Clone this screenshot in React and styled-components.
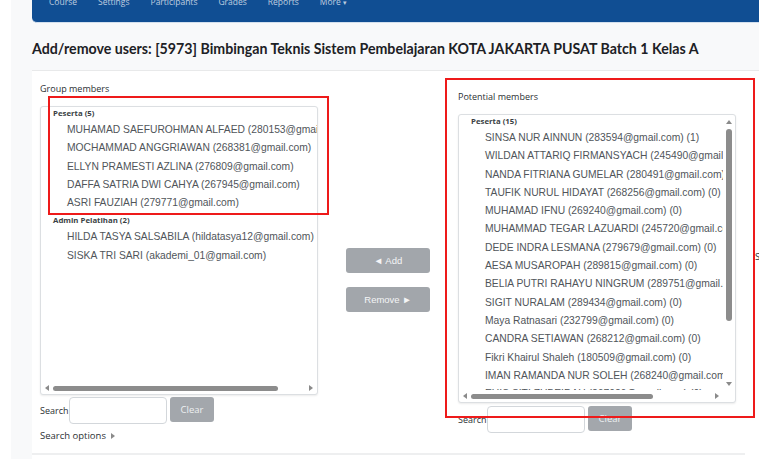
import styled, { createGlobalStyle } from "styled-components";

const GlobalStyle = createGlobalStyle`
  html, body {
    margin: 0;
    padding: 0;
    background: #ffffff;
    overflow: hidden;
  }
  body {
    font-family: "Open Sans", "Liberation Sans", sans-serif;
    color: #1d2125;
  }
`;

const groupMembers = [
  {
    label: "Peserta (5)",
    items: [
      "MUHAMAD SAEFUROHMAN ALFAED (280153@gmail.com)",
      "MOCHAMMAD ANGGRIAWAN (268381@gmail.com)",
      "ELLYN PRAMESTI AZLINA (276809@gmail.com)",
      "DAFFA SATRIA DWI CAHYA (267945@gmail.com)",
      "ASRI FAUZIAH (279771@gmail.com)",
    ],
  },
  {
    label: "Admin Pelatihan (2)",
    items: [
      "HILDA TASYA SALSABILA (hildatasya12@gmail.com)",
      "SISKA TRI SARI (akademi_01@gmail.com)",
    ],
  },
];

const potentialMembers = [
  {
    label: "Peserta (15)",
    items: [
      "SINSA NUR AINNUN (283594@gmail.com) (1)",
      "WILDAN ATTARIQ FIRMANSYACH (245490@gmail.com) (0)",
      "NANDA FITRIANA GUMELAR (280491@gmail.com) (0)",
      "TAUFIK NURUL HIDAYAT (268256@gmail.com) (0)",
      "MUHAMAD IFNU (269240@gmail.com) (0)",
      "MUHAMMAD TEGAR LAZUARDI (245720@gmail.com) (0)",
      "DEDE INDRA LESMANA (279679@gmail.com) (0)",
      "AESA MUSAROPAH (289815@gmail.com) (0)",
      "BELIA PUTRI RAHAYU NINGRUM (289751@gmail.com) (0)",
      "SIGIT NURALAM (289434@gmail.com) (0)",
      "Maya Ratnasari (232799@gmail.com) (0)",
      "CANDRA SETIAWAN (268212@gmail.com) (0)",
      "Fikri Khairul Shaleh (180509@gmail.com) (0)",
      "IMAN RAMANDA NUR SOLEH (268240@gmail.com) (0)",
      "EUIS SITI ZUBEIDAH (267026@gmail.com) (0)",
    ],
  },
];

const navItems = ["Course", "Settings", "Participants", "Grades", "Reports"];

export default function App() {
  return (
    <>
      <GlobalStyle />
      <Page>
        <Gutter />
        <Main>
          <NavBar>
            {navItems.map((item) => (
              <NavItem key={item}>{item}</NavItem>
            ))}
            <NavItem>
              More <Caret>▾</Caret>
            </NavItem>
          </NavBar>

          <Header>
            <Title>
              Add/remove users: [5973] Bimbingan Teknis Sistem Pembelajaran KOTA
              JAKARTA PUSAT Batch 1 Kelas A
            </Title>
          </Header>

          <Content>
            <Form>
              <Column>
                <FieldLabel>Group members</FieldLabel>
                <SelectBox groups={groupMembers} thumbOffset={14} thumbSize={225} />
                <SearchRow>
                  <SearchLabel>Search</SearchLabel>
                  <SearchInput />
                  <ClearButton>Clear</ClearButton>
                </SearchRow>
                <SearchOptions>
                  Search options <SmallArrow />
                </SearchOptions>
              </Column>

              <Actions>
                <ActionButton>◄ Add</ActionButton>
                <ActionButton>Remove ►</ActionButton>
              </Actions>

              <Column $shift={8}>
                <FieldLabel>Potential members</FieldLabel>
                <SelectBox
                  groups={potentialMembers}
                  vertical
                  thumbOffset={14}
                  thumbSize={182}
                />
                <SearchRow $gap={3}>
                  <SearchLabel>Search</SearchLabel>
                  <SearchInput />
                  <ClearButton>Clear</ClearButton>
                </SearchRow>
              </Column>

              <Overflow>Search</Overflow>
            </Form>
            <Divider />
          </Content>

          <Highlight style={{ left: 37, top: 96, width: 281, height: 119 }} />
          <Highlight style={{ left: 434, top: 78, width: 310, height: 340 }} />
        </Main>
      </Page>
    </>
  );
}

const SelectBox = ({ groups, vertical, thumbOffset, thumbSize }) => (
  <Box>
    <List>
      {groups.map((group) => (
        <Group key={group.label}>
          <GroupLabel>{group.label}</GroupLabel>
          {group.items.map((item) => (
            <Option key={item}>{item}</Option>
          ))}
        </Group>
      ))}
    </List>
    {vertical && (
      <VTrack>
        <ArrowUp />
        <VThumb />
        <ArrowDown />
      </VTrack>
    )}
    <HTrack>
      <ArrowLeft />
      <HRail>
        <HThumb $offset={thumbOffset} $size={thumbSize} />
      </HRail>
      <ArrowRight />
    </HTrack>
  </Box>
);

const Page = styled.div`
  display: flex;
  height: 459px;
`;

const Gutter = styled.div`
  width: 11px;
  flex-shrink: 0;
  background: #ffffff;
`;

const Main = styled.div`
  position: relative;
  flex: 1;
  display: flex;
  flex-direction: column;
  background: #f8f9fa;
  padding-left: 21px;
  overflow: hidden;
`;

const NavBar = styled.div`
  height: 22px;
  display: flex;
  align-items: flex-start;
  gap: 21px;
  padding-left: 17px;
  background: #104e93;
  border-bottom-left-radius: 5px;
  border-bottom: 1px solid #d3e0ee;
  overflow: hidden;
`;

const NavItem = styled.span`
  margin-top: -4px;
  font-size: 8.5px;
  line-height: 12px;
  color: rgba(255, 255, 255, 0.72);
  white-space: nowrap;
`;

const Caret = styled.span`
  font-size: 7px;
`;

const Header = styled.div`
  height: 47px;
  display: flex;
  align-items: center;
  padding-top: 3px;
  box-sizing: border-box;
`;

const Title = styled.h2`
  margin: 0;
  font-family: Lato, "Open Sans", sans-serif;
  font-size: 14.2px;
  font-weight: 700;
  white-space: nowrap;
  color: #1d2125;
`;

const Content = styled.div`
  flex: 1;
  display: flex;
  flex-direction: column;
  background: #ffffff;
  border-top: 1px solid #e8e9ea;
`;

const Form = styled.div`
  display: flex;
  padding: 11px 0 0 8px;
`;

const Column = styled.div`
  display: flex;
  flex-direction: column;
  flex-shrink: 0;
  padding-top: ${(p) => p.$shift || 0}px;
`;

const FieldLabel = styled.div`
  font-size: 9px;
  line-height: 14px;
  color: #2b2f33;
  margin-bottom: 10px;
`;

const Box = styled.div`
  width: 278px;
  height: 289px;
  box-sizing: border-box;
  display: grid;
  grid-template-columns: 1fr auto;
  grid-template-rows: 1fr 12px;
  background: #ffffff;
  border: 1px solid #dcdfe2;
  border-radius: 3px;
  box-shadow: 0 1px 2px rgba(0, 0, 0, 0.08);
  overflow: hidden;
`;

const List = styled.div`
  overflow: hidden;
  white-space: nowrap;
`;

const Group = styled.div`
  & + & {
    margin-top: 2px;
  }
`;

const GroupLabel = styled.div`
  padding: 0 0 2px 12px;
  font-size: 7.8px;
  font-weight: 700;
  line-height: 12px;
  color: #3a3f44;
`;

const Option = styled.div`
  padding-left: 26px;
  font-family: "Liberation Sans", Arial, sans-serif;
  font-size: 10.3px;
  line-height: 18.3px;
  color: #50555a;
`;

const VTrack = styled.div`
  grid-row: 1;
  grid-column: 2;
  width: 12px;
  display: flex;
  flex-direction: column;
  align-items: center;
  padding: 5px 0 4px;
  box-sizing: border-box;
`;

const VThumb = styled.div`
  width: 6px;
  height: 192px;
  margin: 5px 0 auto;
  border-radius: 3px;
  background: #8c8c8c;
`;

const HTrack = styled.div`
  grid-row: 2;
  grid-column: 1;
  display: flex;
  align-items: center;
  padding: 0 4px;
`;

const HRail = styled.div`
  flex: 1;
  display: flex;
  align-items: center;
`;

const HThumb = styled.div`
  margin-left: ${(p) => p.$offset - 10}px;
  width: ${(p) => p.$size}px;
  height: 5px;
  border-radius: 3px;
  background: #8c8c8c;
`;

const ArrowLeft = styled.span`
  width: 0;
  height: 0;
  border-top: 3px solid transparent;
  border-bottom: 3px solid transparent;
  border-right: 4px solid #8a8a8a;
`;

const ArrowRight = styled.span`
  width: 0;
  height: 0;
  border-top: 3px solid transparent;
  border-bottom: 3px solid transparent;
  border-left: 4px solid #8a8a8a;
`;

const ArrowUp = styled.span`
  width: 0;
  height: 0;
  border-left: 3px solid transparent;
  border-right: 3px solid transparent;
  border-bottom: 4px solid #8a8a8a;
`;

const ArrowDown = styled.span`
  width: 0;
  height: 0;
  border-left: 3px solid transparent;
  border-right: 3px solid transparent;
  border-top: 4px solid #8a8a8a;
`;

const SearchRow = styled.div`
  display: flex;
  align-items: flex-start;
  gap: 3px;
  margin-top: ${(p) => p.$gap || 2}px;
`;

const SearchLabel = styled.span`
  font-size: 9px;
  line-height: 27px;
  color: #2b2f33;
  width: 26px;
`;

const SearchInput = styled.div`
  width: 98px;
  height: 27px;
  box-sizing: border-box;
  border: 1px solid #d3d7db;
  border-radius: 4px;
  background: #ffffff;
`;

const ClearButton = styled.div`
  width: 44px;
  height: 25px;
  display: flex;
  align-items: center;
  justify-content: center;
  border-radius: 3px;
  background: #a3a7ac;
  color: #eef0f2;
  font-size: 9.5px;
`;

const SearchOptions = styled.div`
  display: flex;
  align-items: center;
  gap: 5px;
  margin-top: 5px;
  font-size: 9.5px;
  line-height: 14px;
  color: #2b2f33;
`;

const SmallArrow = styled.span`
  width: 0;
  height: 0;
  border-top: 3px solid transparent;
  border-bottom: 3px solid transparent;
  border-left: 4px solid #8a8a8a;
`;

const Actions = styled.div`
  width: 84px;
  flex-shrink: 0;
  margin: 0 28px;
  padding-top: 166px;
  display: flex;
  flex-direction: column;
  gap: 14px;
`;

const ActionButton = styled.div`
  height: 25px;
  display: flex;
  align-items: center;
  justify-content: center;
  border-radius: 3px;
  background: #a2a6ab;
  color: #f4f5f6;
  font-family: "Liberation Sans", Arial, sans-serif;
  font-size: 9.5px;
`;

const Overflow = styled.div`
  flex-shrink: 0;
  margin-left: 19px;
  padding-top: 168px;
  font-size: 9.5px;
  color: #2b2f33;
  white-space: nowrap;
`;

const Divider = styled.div`
  margin: auto 14px 4px 0;
  height: 2px;
  background: #eeeff0;
`;

const Highlight = styled.div`
  position: absolute;
  box-sizing: border-box;
  border: 2px solid #ee1a1a;
  pointer-events: none;
`;
